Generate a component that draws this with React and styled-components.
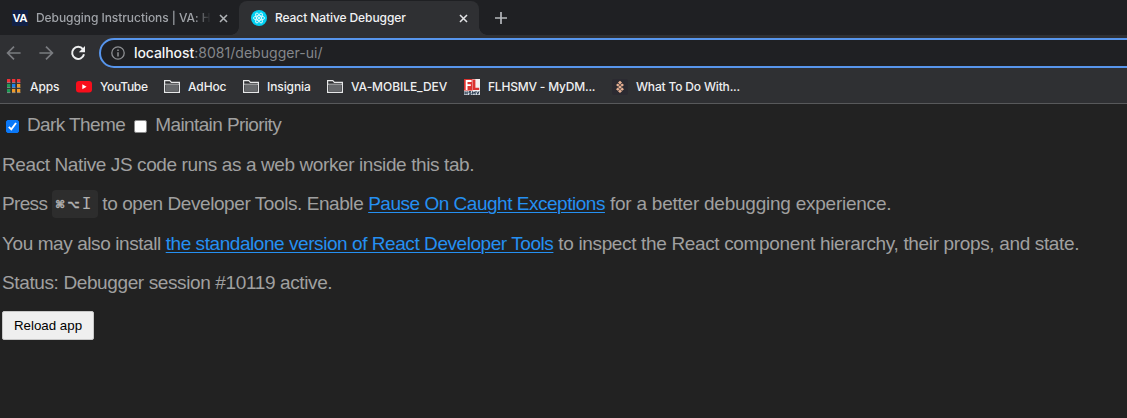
import React from 'react';
import styled, { createGlobalStyle } from 'styled-components';

const GlobalStyle = createGlobalStyle`
  * { box-sizing: border-box; }
  body { margin: 0; background: #222222; overflow: hidden; }
`;

const Window = styled.div`
  display: flex;
  flex-direction: column;
  width: 1127px;
  height: 418px;
  overflow: hidden;
  background: #222222;
  font-family: Inter, Roboto, sans-serif;
`;

const TabStrip = styled.div`
  display: flex;
  align-items: flex-end;
  height: 35px;
  flex: none;
  background: #1f2023;
`;

const Tab = styled.div`
  position: relative;
  display: flex;
  align-items: center;
  width: ${p => p.$width}px;
  height: 34px;
  padding: 0 11px 0 12px;
  border-radius: 8px 8px 0 0;
  background: ${p => (p.$active ? '#2f3033' : 'transparent')};
  color: ${p => (p.$active ? '#f1f2f4' : '#9fa2a7')};

  ${p => p.$active && `
    &::before, &::after {
      content: '';
      position: absolute;
      bottom: 0;
      width: 8px;
      height: 8px;
    }
    &::before { left: -8px; background: radial-gradient(circle at 0 0, transparent 7.5px, #2f3033 8px); }
    &::after { right: -8px; background: radial-gradient(circle at 100% 0, transparent 7.5px, #2f3033 8px); }
  `}
`;

const TabTitle = styled.span`
  flex: 1;
  margin: 0 8px;
  overflow: hidden;
  white-space: nowrap;
  font-size: 12px;
  font-weight: 500;
  line-height: 20px;
  letter-spacing: ${p => p.$spacing || 0}px;
  ${p => p.$fade && 'mask-image: linear-gradient(90deg, #000 calc(100% - 16px), transparent);'}
`;

const VaIcon = styled.span`
  display: flex;
  align-items: center;
  justify-content: center;
  width: 16px;
  height: 16px;
  flex: none;
  background: #112046;
  color: #fff;
  font: bold 11.5px/16px "Liberation Sans", sans-serif;
  letter-spacing: -0.3px;
`;

const Icon = styled.svg`
  display: block;
  flex: none;
  fill: none;
`;

const NewTab = styled.div`
  margin: 0 0 10px 15px;
`;

const Toolbar = styled.div`
  display: flex;
  align-items: center;
  height: 36px;
  flex: none;
  padding-left: 6px;
  background: #2f3033;
`;

const NavIcons = styled.div`
  display: flex;
  gap: 16px;
  width: 93px;
  flex: none;
`;

const AddressBar = styled.div`
  display: flex;
  align-items: center;
  flex: 1;
  height: 30px;
  margin-right: -20px;
  padding-left: 10px;
  border: 2px solid #5795ec;
  border-radius: 15px;
  background: #1f2023;
`;

const Url = styled.span`
  margin-left: 9px;
  color: #85878b;
  font-size: 14px;
  line-height: 20px;
  letter-spacing: 0.04px;
  white-space: nowrap;
`;

const Host = styled.span`
  color: #f4f5f6;
  font-weight: 500;
  letter-spacing: -0.08px;
`;

const Bookmarks = styled.div`
  display: flex;
  height: 33px;
  flex: none;
  padding: 0 0 1px 6px;
  border-bottom: 1px solid #58595b;
  background: #2f3033;
`;

const Bookmark = styled.div`
  display: flex;
  align-items: center;
  gap: ${p => p.$gap || 8}px;
  width: ${p => p.$width}px;
  color: #eeeff0;
  font-size: 12px;
  font-weight: 500;
  letter-spacing: ${p => p.$spacing || 0}px;
  white-space: nowrap;
`;

const Content = styled.main`
  display: flex;
  flex-direction: column;
  align-items: flex-start;
  gap: 17.5px;
  padding: 10px 2px;
  color: #a0a0a0;
  font-family: "Liberation Sans", Arial, sans-serif;
  font-size: 19px;
`;

const Line = styled.p`
  display: flex;
  align-items: center;
  height: 22px;
  margin: 0;
  line-height: 22px;
  letter-spacing: ${p => p.$spacing || 0}px;
  white-space: pre;
`;

const Run = styled.span`
  letter-spacing: ${p => p.$spacing}px;
`;

const Link = styled.a`
  color: #2590f2;
  letter-spacing: ${p => p.$spacing}px;
  text-decoration: underline;
  text-decoration-thickness: 1px;
  text-underline-offset: 2px;
`;

const Check = styled.label`
  display: flex;
  align-items: center;
  gap: 8px;
  margin-left: ${p => p.$left}px;
`;

const Box = styled.span`
  display: flex;
  width: 13px;
  height: 13px;
  margin-top: 3px;
  border: 1px solid ${p => (p.$checked ? '#0a78f8' : '#8a8a8a')};
  border-radius: 2px;
  background: ${p => (p.$checked ? '#0a78f8' : '#fff')};
`;

const Kbd = styled.kbd`
  display: flex;
  align-items: center;
  justify-content: space-between;
  width: 46px;
  height: 28px;
  margin: 0 4px 0 5px;
  padding: 0 7px 0 3px;
  border-radius: 4px;
  background: #2d2d2d;
  color: #b0b0b0;
  letter-spacing: 0;
`;

const KeySymbol = styled.span`
  font: bold 10.5px/28px "DejaVu Sans", sans-serif;
  -webkit-text-stroke: 0.4px #b0b0b0;
`;

const KeyLetter = styled.span`
  font: 16px/28px "DejaVu Sans Mono", monospace;
`;

const ReloadButton = styled.button`
  width: 92px;
  height: 29px;
  margin-top: -1px;
  padding: 0;
  border: 1px solid #c8c8c8;
  border-radius: 2px;
  background: #efefef;
  color: #000;
  font: 13.33px/27px "Liberation Sans", Arial, sans-serif;
`;

const Close = ({ color }) => (
  <Icon width="9" height="9" viewBox="0 0 10 10" stroke={color} strokeWidth="1.7">
    <path d="M1.1 1.1 8.9 8.9M8.9 1.1 1.1 8.9" />
  </Icon>
);

const ReactIcon = () => (
  <Icon width="16" height="16" viewBox="0 0 16 16" stroke="#fff" strokeWidth=".8">
    <circle cx="8" cy="8" r="8" fill="#00d0f2" stroke="none" />
    <ellipse cx="8" cy="8" rx="5.6" ry="2.2" />
    <ellipse cx="8" cy="8" rx="5.6" ry="2.2" transform="rotate(60 8 8)" />
    <ellipse cx="8" cy="8" rx="5.6" ry="2.2" transform="rotate(120 8 8)" />
    <circle cx="8" cy="8" r="1" fill="#fff" stroke="none" />
  </Icon>
);

const FolderIcon = () => (
  <Icon width="16" height="13" viewBox="0 0 16 13">
    <path d="M.6 12.4V.6h5.2l1.6 1.8h8v10z" stroke="#e6e7e8" strokeWidth="1.2" />
    <path d="M2 11.2V5h12.1v6.2z" fill="#66686b" />
    <path d="M1 4.2h14" stroke="#e6e7e8" strokeWidth=".8" />
  </Icon>
);

const appCells = [
  ['#ee3338', '#ee3338', '#ee3338'],
  ['#1e9b55', '#1a82ee', '#f09a28'],
  ['#1e9b55', '#f09a28', '#f09a28'],
];

const AppsIcon = () => (
  <Icon width="15" height="15" viewBox="0 0 15 15">
    {appCells.map((row, y) => row.map((fill, x) => (
      <g key={`${x}-${y}`}>
        <rect x={1 + x * 5} y={y * 5} width="3.3" height="4" fill={fill} />
        <rect x={1 + x * 5} y={y * 5 + 3.2} width="3.3" height=".9" fill="#85878a" />
      </g>
    )))}
  </Icon>
);

const YouTubeIcon = () => (
  <Icon width="16" height="12" viewBox="0 0 16 12">
    <rect width="16" height="11.6" rx="3" fill="#f80e1b" />
    <path d="M6.3 3.3v5L10.6 5.8z" fill="#fff" />
  </Icon>
);

const FlhsmvIcon = () => (
  <Icon width="16" height="16" viewBox="0 0 16 16">
    <rect width="16" height="16" fill="#f3eeee" />
    <rect width="8.6" height="11.5" fill="#dc322f" />
    <path d="M2.6 11V2h5M2.6 6.2h4.2" stroke="#fff" strokeWidth="1.8" />
    <path d="M10.2.5v9.4h5" stroke="#dc322f" strokeWidth="2.4" />
    <rect y="12" width="16" height="4" fill="#d3d9e0" />
    <path d="M1 12.3v3.2M3.2 12.3v3.2M1 14h2.2M7 12.6H5v1.3h2v1.4H5M8.6 15.5v-3l1.3 2 1.3-2v3M12.6 12.3l1.2 3 1.2-3" stroke="#1b2c42" strokeWidth=".9" />
  </Icon>
);

const LatticeIcon = () => (
  <Icon width="16" height="16" viewBox="0 0 16 16">
    <rect width="16" height="16" rx="2" fill="#2b2a31" />
    <g fill="#e8b193">
      <path d="M8 1.8 10 3.6 8 5.4 6 3.6zM5.8 4.4l1.9 1.6-1.9 1.6L4 6zM10.2 4.4 12 6l-1.8 1.6L8.3 6zM8 6.4 10 8.1 8 9.8 6 8.1zM5.8 8.6l1.9 1.6-1.9 1.6L4 10.2zM10.2 8.6l1.8 1.6-1.8 1.6-1.9-1.6zM8 10.5l2 1.8-2 1.8-2-1.8z" />
    </g>
  </Icon>
);

export default function App() {
  return (
    <Window>
      <GlobalStyle />
      <TabStrip>
        <Tab $width={239}>
          <VaIcon>VA</VaIcon>
          <TabTitle $fade $spacing={-0.06}>Debugging Instructions | VA: H</TabTitle>
          <Close color="#b0b3b7" />
        </Tab>
        <Tab $width={240} $active>
          <ReactIcon />
          <TabTitle $spacing={-0.09}>React Native Debugger</TabTitle>
          <Close color="#e2e3e5" />
        </Tab>
        <NewTab>
          <Icon width="14" height="14" viewBox="0 0 14 14" stroke="#b5b8bc" strokeWidth="1.7">
            <path d="M7 1v12M1 7h12" />
          </Icon>
        </NewTab>
      </TabStrip>
      <Toolbar>
        <NavIcons>
          <Icon width="16" height="16" viewBox="0 0 16 16" stroke="#7a7c80" strokeWidth="1.7">
            <path d="M14.6 8H2M8 1.6 1.6 8 8 14.4" />
          </Icon>
          <Icon width="16" height="16" viewBox="0 0 16 16" stroke="#7a7c80" strokeWidth="1.7">
            <path d="M1.4 8H14M8 1.6 14.4 8 8 14.4" />
          </Icon>
          <Icon width="16" height="16" viewBox="0 0 16 16">
            <path d="M12.9 4.2A6 6 0 1 0 14 9.2" stroke="#eeeff0" strokeWidth="2" />
            <path d="M15 1v6.2H8.8z" fill="#eeeff0" />
          </Icon>
        </NavIcons>
        <AddressBar>
          <Icon width="14" height="14" viewBox="0 0 14 14" stroke="#8e9094" strokeWidth="1.3">
            <circle cx="7" cy="7" r="6.2" />
            <path d="M7 6.2v4.2M7 3.5V5" strokeWidth="1.5" />
          </Icon>
          <Url><Host>localhost</Host>:8081/debugger-ui/</Url>
        </AddressBar>
      </Toolbar>
      <Bookmarks>
        <Bookmark $width={70} $gap={9} $spacing={-0.1}><AppsIcon />Apps</Bookmark>
        <Bookmark $width={88} $spacing={-0.3}><YouTubeIcon />YouTube</Bookmark>
        <Bookmark $width={79} $spacing={-0.1}><FolderIcon />AdHoc</Bookmark>
        <Bookmark $width={84} $spacing={-0.1}><FolderIcon />Insignia</Bookmark>
        <Bookmark $width={137} $spacing={-0.06}><FolderIcon />VA-MOBILE_DEV</Bookmark>
        <Bookmark $width={148} $spacing={-0.2}><FlhsmvIcon />FLHSMV - MyDM...</Bookmark>
        <Bookmark $width={140} $spacing={-0.17}><LatticeIcon />What To Do With...</Bookmark>
      </Bookmarks>
      <Content>
        <Line $spacing={-0.6}>
          <Check $left={4}>
            <Box $checked>
              <Icon width="11" height="11" viewBox="0 0 11 11" stroke="#fff" strokeWidth="1.9">
                <path d="M1.8 5.8 4.3 8.4 9 2" />
              </Icon>
            </Box>
            Dark Theme
          </Check>
          <Check $left={9}><Box />Maintain Priority</Check>
        </Line>
        <Line $spacing={-0.4}>React Native JS code runs as a web worker inside this tab.</Line>
        <Line>
          <Run $spacing={-0.65}>Press</Run>
          <Kbd><KeySymbol>⌘</KeySymbol><KeySymbol>⌥</KeySymbol><KeyLetter>I</KeyLetter></Kbd>
          <Run $spacing={-0.43}>{'to open Developer Tools. Enable '}</Run>
          <Link $spacing={-0.48}>Pause On Caught Exceptions</Link>
          <Run $spacing={-0.24}>{' for a better debugging experience.'}</Run>
        </Line>
        <Line>
          <Run $spacing={-0.42}>{'You may also install '}</Run>
          <Link $spacing={-0.44}>the standalone version of React Developer Tools</Link>
          <Run $spacing={-0.35}>{' to inspect the React component hierarchy, their props, and state.'}</Run>
        </Line>
        <Line $spacing={-0.38}>Status: Debugger session #10119 active.</Line>
        <ReloadButton>Reload app</ReloadButton>
      </Content>
    </Window>
  );
}
